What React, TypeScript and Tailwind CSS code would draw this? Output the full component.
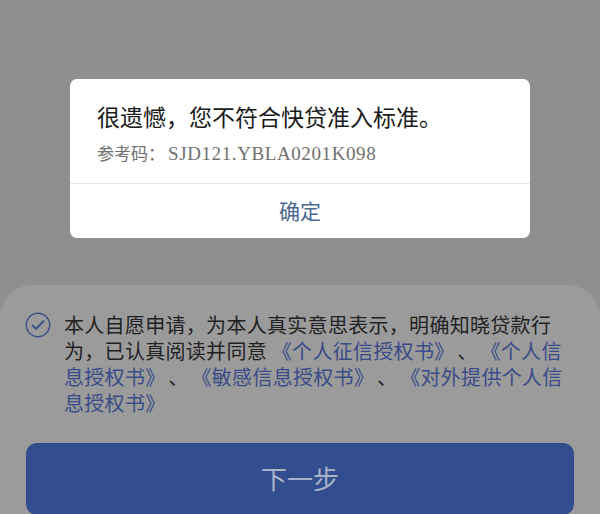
import React from 'react';

const cjk = { fontFamily: '"Noto Sans CJK SC", "Noto Sans", sans-serif' };

const CheckCircle = () => (
  <svg width="26" height="26" viewBox="0 0 24 24" fill="none" className="shrink-0">
    <circle cx="12" cy="12" r="10.8" stroke="#3d5286" strokeWidth="1.4" />
    <path d="M7 12.4l3.2 3.1L17 8.6" stroke="#3d5286" strokeWidth="1.9" strokeLinecap="round" strokeLinejoin="round" />
  </svg>
);

const Link = ({ children }: { children: React.ReactNode }) => (
  <span className="text-[#3a4c88]">{children}</span>
);

const Sep = () => <span className="inline-block w-[26px] text-center">、</span>;

export default function App() {
  return (
    <div className="w-[600px] h-[514px] overflow-hidden bg-[#8f8f8f] flex flex-col" style={cjk}>
      <div className="pt-[79px] flex justify-center">
        <div className="w-[460px] h-[159px] bg-white rounded-[7px] flex flex-col">
          <div className="h-[105px] border-b border-[#e6e6e6] px-[27px] pt-[22px]">
            <p className="text-[23px] leading-[30px] text-[#1b1b1b]">很遗憾，您不符合快贷准入标准。</p>
            <p className="mt-[10px] text-[17px] leading-[24px] text-[#707070] flex items-baseline">
              <span>参考码：</span>
              <span className="ml-[3px] text-[19px] tracking-[0.6px]" style={{ fontFamily: '"Liberation Serif", serif' }}>
                SJD121.YBLA0201K098
              </span>
            </p>
          </div>
          <div className="flex-1 flex items-center justify-center text-[21px] text-[#4c6890]">确定</div>
        </div>
      </div>

      <div className="mt-[47px] flex-1 bg-[#9b9b9b] rounded-t-[32px] px-[26px] pt-[27px]">
        <div className="flex gap-[13px]">
          <div className="-ml-[1px]">
            <CheckCircle />
          </div>
          <div className="text-[20px] leading-[26px] tracking-[0.3px] text-[#222222] whitespace-nowrap">
            <p>本人自愿申请，为本人真实意思表示，明确知晓贷款行</p>
            <p>
              为，已认真阅读并同意 <Link>《个人征信授权书》</Link><Sep /><Link>《个人信</Link>
            </p>
            <p>
              <Link>息授权书》</Link><Sep /><Link>《敏感信息授权书》</Link><Sep /><Link>《对外提供个人信</Link>
            </p>
            <p>
              <Link>息授权书》</Link>
            </p>
          </div>
        </div>
        <div className="mt-[27px] h-[72px] bg-[#334e8f] rounded-[11px] flex items-center justify-center text-[26px] text-[#a8b2c9] pb-[4px]">
          下一步
        </div>
      </div>
    </div>
  );
}
